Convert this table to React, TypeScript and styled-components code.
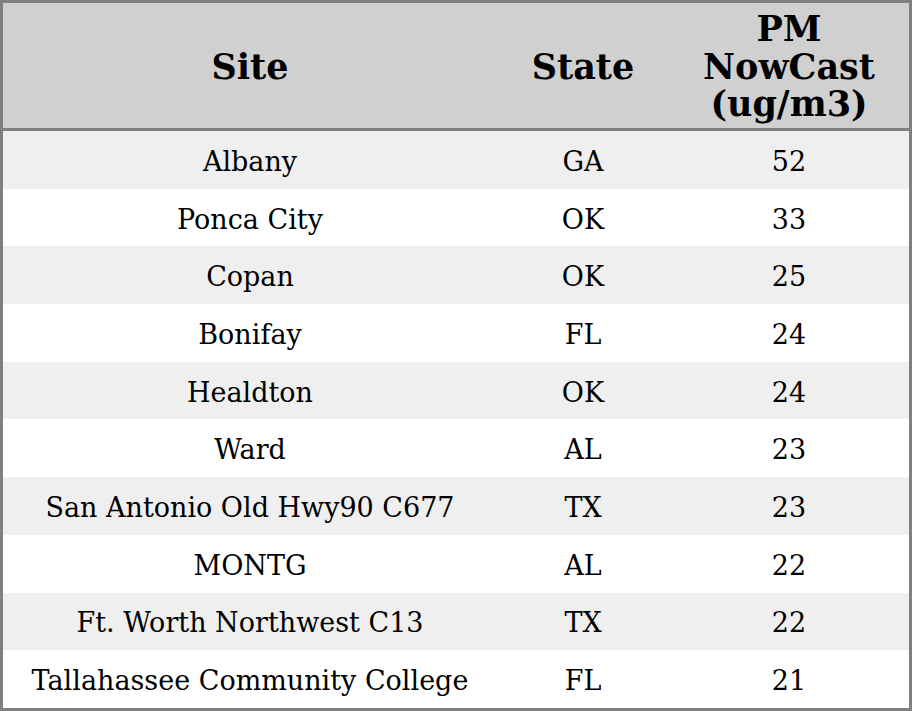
import React from 'react'
import styled, { createGlobalStyle } from 'styled-components'

const GlobalStyle = createGlobalStyle`
  html, body {
    margin: 0;
    padding: 0;
    background: #ffffff;
  }
`

const Table = styled.table`
  width: 912px;
  border-collapse: separate;
  border-spacing: 0;
  table-layout: fixed;
  border: 3px solid #808080;
  font-family: 'DejaVu Serif', 'Liberation Serif', serif;
  color: #000;
`

const Col = styled.col<{ $w: number }>`
  width: ${p => p.$w}px;
`

const HeadRow = styled.tr`
  background: #d0d0d0;
`

const HeadCell = styled.th`
  height: 128px;
  padding: 2px 4px 0;
  box-sizing: border-box;
  border-bottom: 3px solid #808080;
  font-size: 35px;
  font-weight: bold;
  line-height: 37.5px;
  text-align: center;
  vertical-align: middle;
`

const Row = styled.tr<{ $striped: boolean }>`
  background: ${p => (p.$striped ? '#efefef' : '#ffffff')};
`

const Cell = styled.td`
  height: 57.7px;
  padding: 4px 4px 0;
  box-sizing: border-box;
  font-size: 27px;
  line-height: 32px;
  text-align: center;
  vertical-align: middle;
  white-space: nowrap;
`

const rows = [
  ['Albany', 'GA', '52'],
  ['Ponca City', 'OK', '33'],
  ['Copan', 'OK', '25'],
  ['Bonifay', 'FL', '24'],
  ['Healdton', 'OK', '24'],
  ['Ward', 'AL', '23'],
  ['San Antonio Old Hwy90 C677', 'TX', '23'],
  ['MONTG', 'AL', '22'],
  ['Ft. Worth Northwest C13', 'TX', '22'],
  ['Tallahassee Community College', 'FL', '21'],
]

export default function App() {
  return (
    <>
      <GlobalStyle />
      <Table>
        <colgroup>
          <Col $w={494} />
          <Col $w={172} />
          <Col $w={240} />
        </colgroup>
        <thead>
          <HeadRow>
            <HeadCell>Site</HeadCell>
            <HeadCell>State</HeadCell>
            <HeadCell>
              PM
              <br />
              NowCast
              <br />
              (ug/m3)
            </HeadCell>
          </HeadRow>
        </thead>
        <tbody>
          {rows.map((r, i) => (
            <Row key={r[0]} $striped={i % 2 === 0}>
              <Cell>{r[0]}</Cell>
              <Cell>{r[1]}</Cell>
              <Cell>{r[2]}</Cell>
            </Row>
          ))}
        </tbody>
      </Table>
    </>
  )
}
